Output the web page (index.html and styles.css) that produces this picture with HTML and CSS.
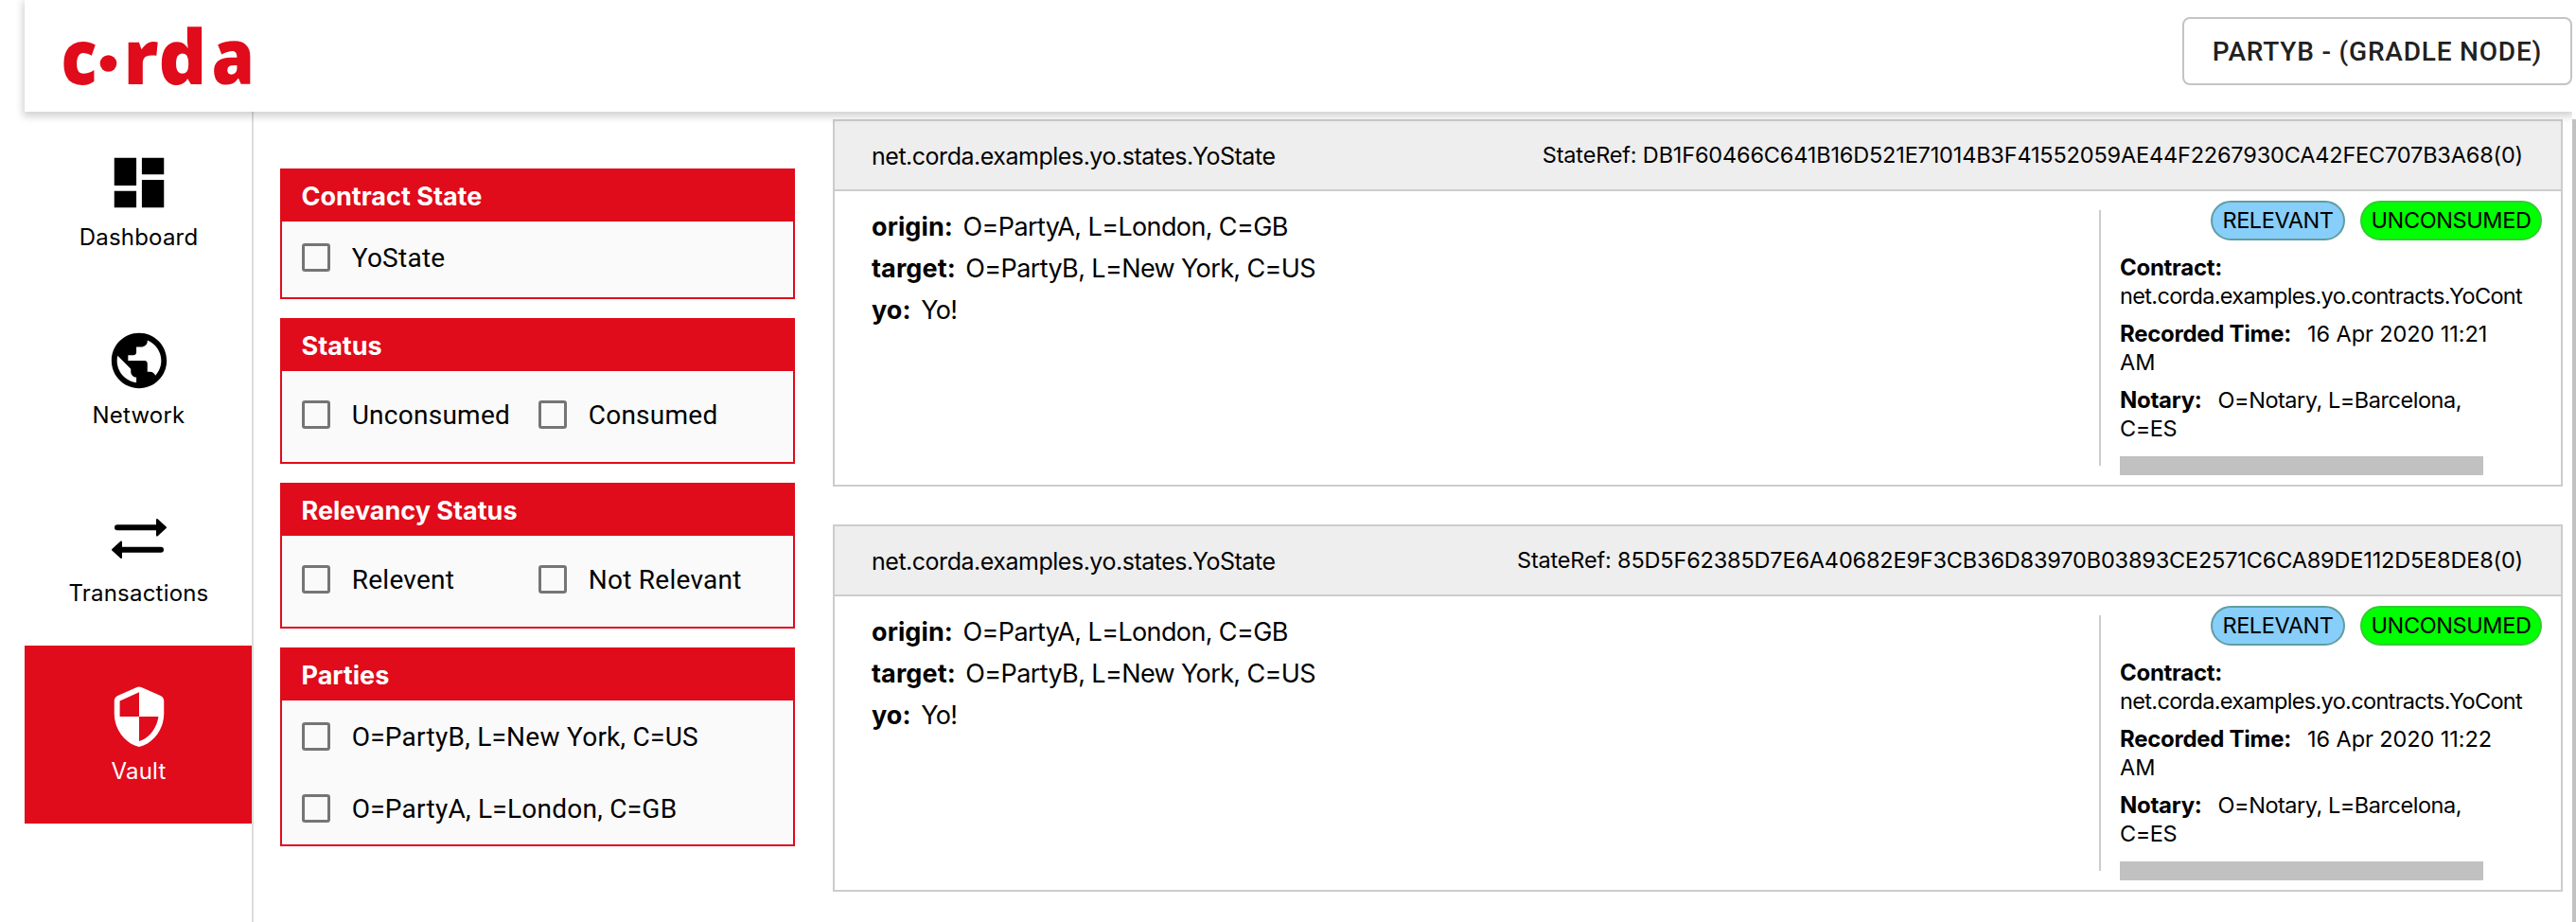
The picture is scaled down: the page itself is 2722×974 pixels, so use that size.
FILE: index.html
```html
<!DOCTYPE html>
<html lang="en">
<head>
<meta charset="utf-8">
<title>Corda Node Explorer</title>
<link rel="stylesheet" href="styles.css">
</head>
<body>
<div class="app">
  <header class="topbar">
    <svg class="logo" width="210" height="100" viewBox="0 -12 210 100" role="img" aria-label="corda">
      <text class="logo-text" x="4.5" y="68.7" textLength="38" lengthAdjust="spacingAndGlyphs">c</text>
      <circle cx="54.5" cy="47" r="8.800"/>
      <text class="logo-text" x="70.5 107.5" y="68.7">rd</text>
      <text class="logo-text" x="163.500" y="68.7" textLength="45.5" lengthAdjust="spacingAndGlyphs">a</text>
    </svg>
    <button class="node-button">PARTYB - (GRADLE NODE)</button>
  </header>
  <div class="body">
    <nav class="sidebar">
      <a class="nav-item">
        <svg class="nav-icon" viewBox="0 0 24 24"><path d="M3 13h8V3H3v10zm0 8h8v-6H3v6zm10 0h8V11h-8v10zm0-18v6h8V3h-8z"/></svg>
        <span>Dashboard</span>
      </a>
      <a class="nav-item">
        <svg class="nav-icon" viewBox="0 0 24 24"><path d="M12 2C6.48 2 2 6.48 2 12s4.48 10 10 10 10-4.48 10-10S17.52 2 12 2zm-1 17.93c-3.95-.49-7-3.85-7-7.93 0-.62.08-1.21.21-1.79L9 15v1c0 1.1.9 2 2 2v1.93zm6.9-2.54c-.26-.81-1-1.39-1.9-1.39h-1v-3c0-.55-.45-1-1-1H8v-2h2c.55 0 1-.45 1-1V7h2c1.1 0 2-.9 2-2v-.41c2.93 1.19 5 4.06 5 7.41 0 2.08-.8 3.97-2.1 5.39z"/></svg>
        <span>Network</span>
      </a>
      <a class="nav-item">
        <svg class="nav-icon" viewBox="0 0 70 70">
          <path d="M12 23.3H55M58 46.7H15" fill="none" stroke="currentColor" stroke-width="6" stroke-linecap="round"/>
          <path d="M54 15L63 23.3L54 31.6zM16 38.4L7 46.7L16 55z" stroke="currentColor" stroke-width="2" stroke-linejoin="round"/>
        </svg>
        <span>Transactions</span>
      </a>
      <a class="nav-item active">
        <svg class="nav-icon" viewBox="0 0 24 24"><path d="M11.19 1.36l-7 3.11C3.47 4.79 3 5.51 3 6.3V11c0 5.55 3.84 10.74 9 12 5.16-1.26 9-6.45 9-12V6.3c0-.79-.47-1.51-1.19-1.83l-7-3.11c-.51-.23-1.11-.23-1.62 0zM12 11.99h7c-.53 4.12-3.28 7.79-7 8.94V12H5V6.3l7-3.11v8.8z"/></svg>
        <span>Vault</span>
      </a>
    </nav>

    <section class="filters">
      <div class="filter">
        <h2>Contract State</h2>
        <div class="options">
          <label class="option wide"><i class="box"></i>YoState</label>
        </div>
      </div>
      <div class="filter">
        <h2>Status</h2>
        <div class="options paired">
          <label class="option"><i class="box"></i>Unconsumed</label>
          <label class="option"><i class="box"></i>Consumed</label>
        </div>
      </div>
      <div class="filter">
        <h2>Relevancy Status</h2>
        <div class="options paired">
          <label class="option"><i class="box"></i>Relevent</label>
          <label class="option"><i class="box"></i>Not Relevant</label>
        </div>
      </div>
      <div class="filter">
        <h2>Parties</h2>
        <div class="options list">
          <label class="option wide"><i class="box"></i>O=PartyB, L=New York, C=US</label>
          <label class="option wide"><i class="box"></i>O=PartyA, L=London, C=GB</label>
        </div>
      </div>
    </section>

    <main class="results">
      <article class="state">
        <div class="state-head">
          <span class="state-name">net.corda.examples.yo.states.YoState</span>
          <span class="state-ref">StateRef: DB1F60466C641B16D521E71014B3F41552059AE44F2267930CA42FEC707B3A68(0)</span>
        </div>
        <div class="state-body">
          <div class="fields">
            <p><b>origin:</b>O=PartyA, L=London, C=GB</p>
            <p><b>target:</b>O=PartyB, L=New York, C=US</p>
            <p><b>yo:</b>Yo!</p>
          </div>
          <div class="side">
            <div class="badges"><span class="badge relevant">RELEVANT</span><span class="badge unconsumed">UNCONSUMED</span></div>
            <div class="meta">
              <p class="contract"><b>Contract:</b><br>net.corda.examples.yo.contracts.YoContract</p>
              <p class="time"><b>Recorded Time:</b>16 Apr 2020 11:21<br>AM</p>
              <p><b>Notary:</b>O=Notary, L=Barcelona,<br>C=ES</p>
            </div>
            <div class="scroll-thumb"></div>
          </div>
        </div>
      </article>
      <article class="state">
        <div class="state-head">
          <span class="state-name">net.corda.examples.yo.states.YoState</span>
          <span class="state-ref">StateRef: 85D5F62385D7E6A40682E9F3CB36D83970B03893CE2571C6CA89DE112D5E8DE8(0)</span>
        </div>
        <div class="state-body">
          <div class="fields">
            <p><b>origin:</b>O=PartyA, L=London, C=GB</p>
            <p><b>target:</b>O=PartyB, L=New York, C=US</p>
            <p><b>yo:</b>Yo!</p>
          </div>
          <div class="side">
            <div class="badges"><span class="badge relevant">RELEVANT</span><span class="badge unconsumed">UNCONSUMED</span></div>
            <div class="meta">
              <p class="contract"><b>Contract:</b><br>net.corda.examples.yo.contracts.YoContract</p>
              <p class="time"><b>Recorded Time:</b>16 Apr 2020 11:22<br>AM</p>
              <p><b>Notary:</b>O=Notary, L=Barcelona,<br>C=ES</p>
            </div>
            <div class="scroll-thumb"></div>
          </div>
        </div>
      </article>
    </main>
  </div>
</div>
<div class="page-scroll"></div>
</body>
</html>
```
FILE: styles.css
```css
* { box-sizing: border-box; }

body {
  margin: 0;
  height: 974px;
  display: flex;
  overflow: hidden;
  background: #fff;
  color: #000;
  font-family: Inter, "Liberation Sans", sans-serif;
}

h2, p { margin: 0; }

.app {
  width: 2718px;
  height: 974px;
  padding-left: 26px;
  display: flex;
  flex-direction: column;
  overflow: hidden;
}

.page-scroll {
  width: 4px;
  margin-top: 126px;
  background: #c1c1c1;
}

/* Top bar */
.topbar {
  position: relative;
  z-index: 2;
  height: 118px;
  flex: none;
  display: flex;
  justify-content: space-between;
  align-items: flex-start;
  padding: 8px 0 0 34px;
  background: #fff;
  box-shadow: 0 3px 8px 2px rgba(0, 0, 0, .18);
}

.logo { fill: #e00b1b; overflow: visible; }
.logo-text { font: 800 79px "Open Sans", "Noto Sans", sans-serif; }

.node-button {
  width: 412px;
  height: 72px;
  margin-top: 10px;
  padding: 0;
  border: 2px solid #c4c4c4;
  border-radius: 8px;
  background: #fff;
  color: #212121;
  font: 500 28px Roboto, sans-serif;
  letter-spacing: .8px;
}

.body { flex: 1; display: flex; min-height: 0; }

/* Sidebar */
.sidebar { width: 242px; border-right: 2px solid #dcdcdc; }

.nav-item {
  height: 188px;
  padding: 40px 0 0 1px;
  display: flex;
  flex-direction: column;
  align-items: center;
  gap: 9px;
  font-size: 24px;
  line-height: 28px;
  letter-spacing: .2px;
}
.nav-icon { width: 70px; height: 70px; fill: currentColor; }
.active { background: #e00b1b; color: #fff; }

/* Filters */
.filters {
  width: 572px;
  padding: 60px 0 0 28px;
  display: flex;
  flex-direction: column;
  gap: 20px;
}
.filter { border: 2px solid #e00b1b; background: #fafafa; }
.filter h2 {
  height: 54px;
  padding-left: 20.5px;
  background: #e00b1b;
  color: #fff;
  font-size: 27px;
  font-weight: 700;
  line-height: 56px;
}
.options { display: flex; flex-wrap: wrap; padding: 0 0 4px 21px; }
.paired { padding: 8px 0 12px 21px; }
.list { padding-bottom: 0; }
.option {
  width: 250px;
  height: 76px;
  display: flex;
  align-items: center;
  gap: 22.700px;
  font: 28px Roboto, sans-serif;
  letter-spacing: .26px;
  white-space: nowrap;
}
.wide { width: 100%; }
.box {
  width: 30px;
  height: 30px;
  border: 3px solid #757575;
  border-radius: 3.3px;
}

/* Vault states */
.results {
  flex: 1;
  padding: 8px 10px 0 40px;
  display: flex;
  flex-direction: column;
  gap: 40px;
}
.state { height: 388px; flex: none; border: 2px solid #ccc; }
.state-head {
  height: 74px;
  padding: 0 40px 0 39px;
  display: flex;
  justify-content: space-between;
  align-items: center;
  border-bottom: 2px solid #ccc;
  background: #eee;
}
.state-name { font-size: 25px; letter-spacing: -.48px; line-height: 34px; padding-top: 2px; }
.state-ref { font-size: 23.5px; letter-spacing: -.17px; line-height: 34px; }
.state-body { height: 310px; display: flex; justify-content: space-between; }

.fields {
  padding: 16px 0 0 39px;
  font-size: 27px;
  line-height: 44px;
  letter-spacing: -.62px;
}
.fields b { margin-right: 10.500px; letter-spacing: .1px; }

.side { width: 488px; padding-top: 10px; position: relative; }
.side::before {
  content: "";
  position: absolute;
  left: 0;
  top: 20px;
  width: 2px;
  height: 270px;
  background: #ccc;
}
.badges { display: flex; justify-content: flex-end; gap: 16px; padding-right: 20px; }
.badge {
  height: 42px;
  border: 2px solid;
  border-radius: 21px;
  font-size: 23.5px;
  letter-spacing: -.4px;
  line-height: 38px;
  text-align: center;
}
.relevant { width: 142px; background: #87cefa; border-color: #5f9ea0; }
.unconsumed { width: 192px; background: #0f0; border-color: #32cd32; }

.meta {
  width: 426px;
  margin: 14px 0 0 22px;
  overflow: hidden;
  font-size: 23.5px;
  line-height: 30px;
  letter-spacing: -.47px;
  white-space: nowrap;
}
.meta p { margin-bottom: 10px; }
.meta b { margin-right: 17px; font-size: 24px; letter-spacing: -.27px; line-height: 1; }
.meta .contract { letter-spacing: -.66px; }
.meta .time { letter-spacing: -.08px; }
.scroll-thumb { width: 384px; height: 20px; margin: 4px 0 0 22px; background: #c1c1c1; }
```
